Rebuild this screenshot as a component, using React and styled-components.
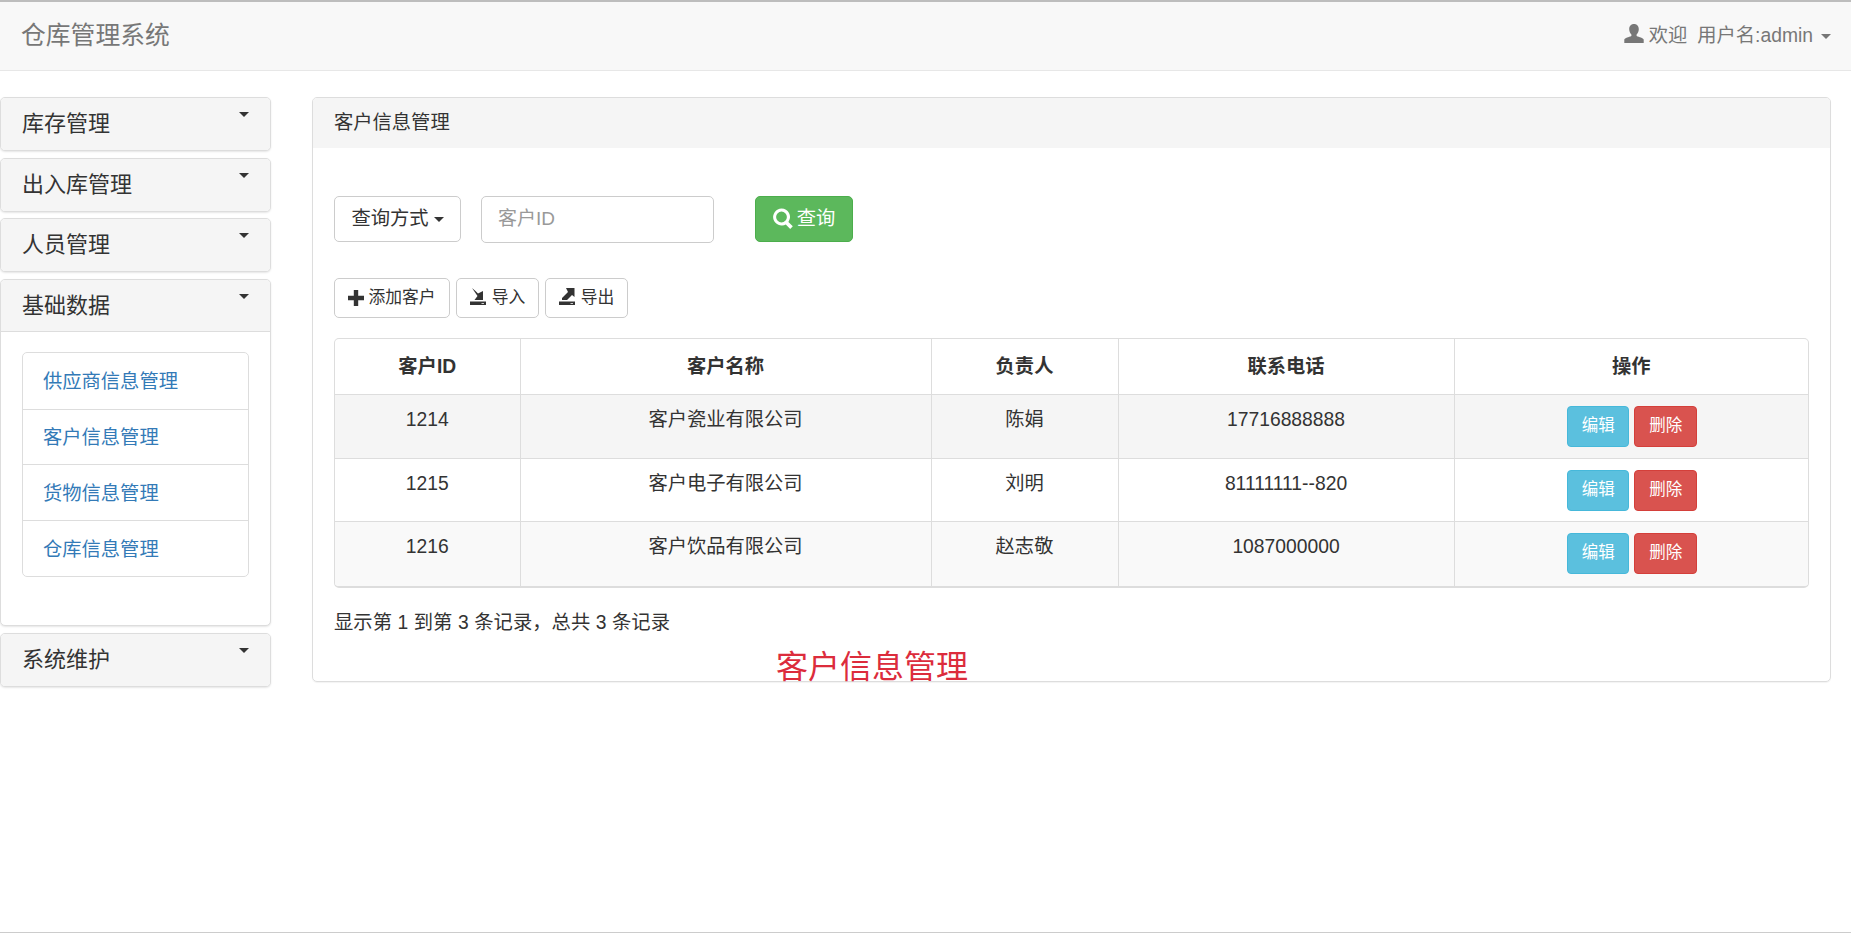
import React from 'react'
import styled, { createGlobalStyle } from 'styled-components'

const Global = createGlobalStyle`
  * { box-sizing: border-box; }
  html, body { margin: 0; height: 100%; }
  body {
    background: #fff;
    color: #333;
    font-family: "Liberation Sans", "Noto Sans CJK SC", sans-serif;
    font-size: 19px;
    line-height: 1.42857;
  }
  #root { min-height: 933px; border-bottom: 1px solid #ccc; }
`

const Navbar = styled.div`
  height: 71px;
  background: #f8f8f8;
  border-top: 2px solid #bdbdbd;
  border-bottom: 1px solid #e7e7e7;
  display: flex;
  align-items: center;
  justify-content: space-between;
  padding: 0 20px 0 21px;
  color: #777;
`
const Brand = styled.div`
  font-size: 24.8px;
`
const UserInfo = styled.div`
  display: flex;
  align-items: center;
  font-size: 19.3px;
`
const UserName = styled.span`
  margin-left: ${p => p.$ml || 10}px;
`
const Caret = styled.span`
  display: inline-block;
  width: 0;
  height: 0;
  margin-left: ${p => p.$ml || 8}px;
  border-top: 5px solid ${p => p.$color || 'currentColor'};
  border-left: 5px solid transparent;
  border-right: 5px solid transparent;
`
const Layout = styled.div`
  display: flex;
  align-items: flex-start;
  gap: 41px;
  padding: 26px 20px 0 0;
`
const Sidebar = styled.div`
  width: 271px;
  flex: none;
  display: flex;
  flex-direction: column;
  gap: 6.7px;
`
const MenuPanel = styled.div`
  background: #fff;
  border: 1px solid #ddd;
  border-radius: 5px;
  box-shadow: 0 1px 2px rgba(0, 0, 0, .1);
  overflow: hidden;
`
const MenuHeading = styled.div`
  height: 52px;
  background: #f5f5f5;
  display: flex;
  justify-content: space-between;
  padding: 10px 21px 0 21px;
  font-size: 22px;
  line-height: 31px;
  color: #333;
  border-bottom: ${p => (p.$open ? '1px solid #ddd' : 'none')};
`
const HeadCaret = styled(Caret)`
  margin-top: 4px;
`
const MenuBody = styled.div`
  padding: 20px 21px 48px;
`
const LinkList = styled.div`
  border: 1px solid #ddd;
  border-radius: 5px;
`
const LinkItem = styled.div`
  height: 55.7px;
  padding: 2px 20px 0;
  display: flex;
  align-items: center;
  color: #337ab7;
  font-size: 19.3px;
  border-top: ${p => (p.$first ? 'none' : '1px solid #ddd')};
`
const MainPanel = styled.div`
  flex: 1;
  height: 585px;
  border: 1px solid #ddd;
  border-radius: 5px;
  box-shadow: 0 1px 1px rgba(0, 0, 0, .05);
`
const MainHeading = styled.div`
  height: 50px;
  background: #f5f5f5;
  border-radius: 4px 4px 0 0;
  padding: 0 21px 1px;
  display: flex;
  align-items: center;
  font-size: 19.3px;
`
const MainBody = styled.div`
  padding: 48px 21px 0;
`
const SearchRow = styled.div`
  display: flex;
  align-items: flex-start;
`
const Btn = styled.div`
  display: inline-flex;
  align-items: center;
  justify-content: center;
  height: ${p => p.$h || 46}px;
  width: ${p => p.$w}px;
  flex: none;
  border: 1px solid #ccc;
  border-radius: 5px;
  background: #fff;
  color: #333;
  font-size: ${p => p.$fs || 19.3}px;
`
const SearchButton = styled(Btn)`
  margin-left: 41px;
  background: #5cb85c;
  border-color: #4cae4c;
  color: #fff;
`
const SearchInput = styled.div`
  width: 233px;
  height: 47px;
  margin-left: 20px;
  border: 1px solid #ccc;
  border-radius: 5px;
  color: #999;
  display: flex;
  align-items: center;
  padding: 0 16px 1px;
  font-size: 19px;
`
const Toolbar = styled.div`
  display: flex;
  gap: 6px;
  margin-top: 35px;
`
const TableWrap = styled.div`
  margin-top: 20px;
  border: 1px solid #ddd;
  border-bottom-width: 2px;
  border-radius: 5px;
  overflow: hidden;
`
const Table = styled.table`
  width: 100%;
  border-collapse: collapse;
  table-layout: fixed;
`
const Th = styled.th`
  width: ${p => p.$w}px;
  height: 55px;
  text-align: center;
  font-size: 19.3px;
  font-weight: 700;
  padding: 2px 0 0;
  border-left: ${p => (p.$first ? 'none' : '1px solid #ddd')};
`
const Row = styled.tr`
  background: ${p => p.$bg};
  height: ${p => p.$h}px;
  border-top: 1px solid #ddd;
`
const Td = styled.td`
  vertical-align: top;
  text-align: center;
  padding: 11px 0 0;
  font-size: 19.3px;
  border-left: ${p => (p.$first ? 'none' : '1px solid #ddd')};
`
const ActionCell = styled.div`
  display: flex;
  justify-content: center;
  gap: 5px;
  padding-left: 2px;
`
const ActionBtn = styled.div`
  width: ${p => p.$w}px;
  height: 41px;
  border-radius: 4px;
  border: 1px solid ${p => p.$border};
  background: ${p => p.$bg};
  color: #fff;
  font-size: 16.5px;
  display: flex;
  align-items: center;
  justify-content: center;
`
const Summary = styled.div`
  margin-top: 21px;
  font-size: 19.3px;
  letter-spacing: .08px;
`
const RedTitle = styled.div`
  color: #dc2c3c;
  font-size: 32px;
  line-height: 38px;
  margin: 11px 0 0 442px;
`
const IconBox = styled.svg`
  flex: none;
  fill: currentColor;
  margin-right: ${p => p.$mr || 0}px;
  margin-top: ${p => p.$mt || 0}px;
`

const UserIcon = () => (
  <IconBox width="20" height="21" viewBox="0 0 20 21" $mt={-5}>
    <path d="M10 1c3 0 4.8 2.2 4.8 5.2 0 2.1-1 4-2.2 5.2v1.500c2.600 1 6.600 2 7.100 3.700V20H.3v-3.400c.5-1.700 4.500-2.700 7.100-3.700v-1.500C6.200 10.200 5.200 8.300 5.200 6.200 5.200 3.200 7 1 10 1z" />
  </IconBox>
)
const SearchIcon = () => (
  <IconBox width="20" height="21" viewBox="0 0 20 20" $mr={4} $mt={-2}>
    <path fillRule="evenodd" d="M8.500 0a8.500 8.500 0 0 1 6.900 13.400l4.400 4.400-2.600 2.600-4.400-4.500A8.500 8.500 0 1 1 8.500 0zm0 3.100a5.400 5.400 0 1 0 0 10.800 5.400 5.400 0 0 0 0-10.800z" />
  </IconBox>
)
const PlusIcon = () => (
  <IconBox width="16" height="16" viewBox="0 0 16 16" $mr={4} $mt={-1}>
    <path d="M5.800 0h4.400v5.800H16v4.400h-5.800V16H5.800v-5.800H0V5.800h5.800z" />
  </IconBox>
)
const ImportIcon = () => (
  <IconBox width="16" height="17" viewBox="0 0 16 17" $mr={6} $mt={-3}>
    <path d="M2 0l3.500 3L8 5.500 13 3v9H4.500L7.500 8z" />
    <path fillRule="evenodd" d="M0 13.500h16V17H0zm11.500 1.500v.8h2.500V15z" />
  </IconBox>
)
const ExportIcon = () => (
  <IconBox width="16" height="17" viewBox="0 0 16 17" $mr={6} $mt={-3}>
    <path d="M7 0h8.500v9l-2.500-2-5 5H3v-2l6-6z" />
    <path fillRule="evenodd" d="M0 13.500h16V17H0zm11.500 1.500v.8h2.500V15z" />
  </IconBox>
)

const rows = [
  { id: '1214', name: '客户瓷业有限公司', owner: '陈娟', phone: '17716888888', bg: '#f5f5f5', h: 64 },
  { id: '1215', name: '客户电子有限公司', owner: '刘明', phone: '81111111--820', bg: '#fff', h: 63 },
  { id: '1216', name: '客户饮品有限公司', owner: '赵志敬', phone: '1087000000', bg: '#f9f9f9', h: 65 },
]

const MenuGroup = ({ title, children }) => (
  <MenuPanel>
    <MenuHeading $open={!!children}>
      {title}
      <HeadCaret $color="#333" />
    </MenuHeading>
    {children && <MenuBody>{children}</MenuBody>}
  </MenuPanel>
)

export default function App() {
  return (
    <>
      <Global />
      <Navbar>
        <Brand>仓库管理系统</Brand>
        <UserInfo>
          <UserIcon />
          <UserName $ml={5}>欢迎</UserName>
          <UserName>用户名:admin</UserName>
          <Caret />
        </UserInfo>
      </Navbar>
      <Layout>
        <Sidebar>
          <MenuGroup title="库存管理" />
          <MenuGroup title="出入库管理" />
          <MenuGroup title="人员管理" />
          <MenuGroup title="基础数据">
            <LinkList>
              <LinkItem $first>供应商信息管理</LinkItem>
              <LinkItem>客户信息管理</LinkItem>
              <LinkItem>货物信息管理</LinkItem>
              <LinkItem>仓库信息管理</LinkItem>
            </LinkList>
          </MenuGroup>
          <MenuGroup title="系统维护" />
        </Sidebar>
        <MainPanel>
          <MainHeading>客户信息管理</MainHeading>
          <MainBody>
            <SearchRow>
              <Btn $w={127}>
                查询方式
                <Caret $ml={5} />
              </Btn>
              <SearchInput>客户ID</SearchInput>
              <SearchButton $w={98}>
                <SearchIcon />
                查询
              </SearchButton>
            </SearchRow>
            <Toolbar>
              <Btn $w={116} $h={40} $fs={16.8}>
                <PlusIcon />
                添加客户
              </Btn>
              <Btn $w={83} $h={40} $fs={16.8}>
                <ImportIcon />
                导入
              </Btn>
              <Btn $w={83} $h={40} $fs={16.8}>
                <ExportIcon />
                导出
              </Btn>
            </Toolbar>
            <TableWrap>
              <Table>
                <thead>
                  <tr>
                    <Th $first $w={185}>客户ID</Th>
                    <Th $w={411}>客户名称</Th>
                    <Th $w={187}>负责人</Th>
                    <Th $w={336}>联系电话</Th>
                    <Th>操作</Th>
                  </tr>
                </thead>
                <tbody>
                  {rows.map(r => (
                    <Row key={r.id} $bg={r.bg} $h={r.h}>
                      <Td $first>{r.id}</Td>
                      <Td>{r.name}</Td>
                      <Td>{r.owner}</Td>
                      <Td>{r.phone}</Td>
                      <Td>
                        <ActionCell>
                          <ActionBtn $w={62} $bg="#5bc0de" $border="#46b8da">编辑</ActionBtn>
                          <ActionBtn $w={63} $bg="#d9534f" $border="#d43f3a">删除</ActionBtn>
                        </ActionCell>
                      </Td>
                    </Row>
                  ))}
                </tbody>
              </Table>
            </TableWrap>
            <Summary>显示第 1 到第 3 条记录，总共 3 条记录</Summary>
            <RedTitle>客户信息管理</RedTitle>
          </MainBody>
        </MainPanel>
      </Layout>
    </>
  )
}
